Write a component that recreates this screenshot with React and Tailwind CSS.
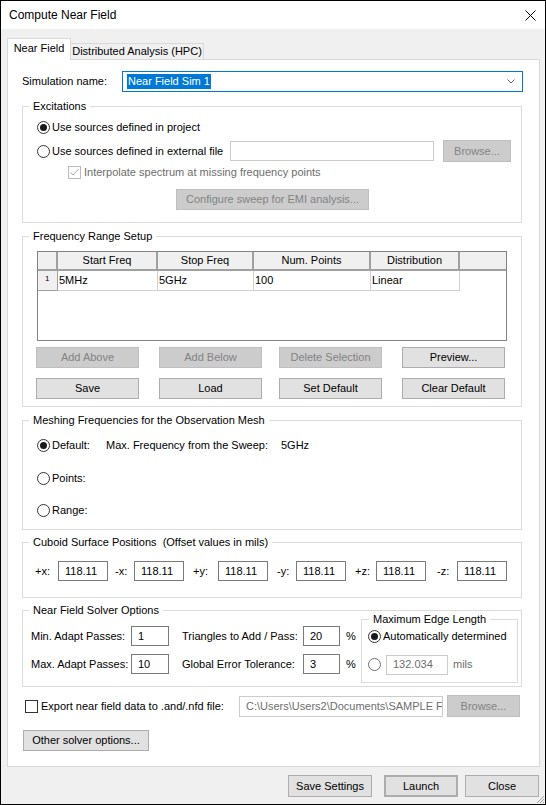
import React from 'react'

function Radio({ checked, disabled }) {
  return (
    <span className={`w-[13px] h-[13px] rounded-full border bg-white flex items-center justify-center shrink-0 ${disabled ? 'border-[#6d6d6d]' : 'border-[#333333]'}`}>
      {checked && <span className="w-[7px] h-[7px] rounded-full bg-[#1a1a1a]" />}
    </span>
  )
}

function Check({ checked, disabled }) {
  return (
    <span className={`w-[13px] h-[13px] border bg-white flex items-center justify-center shrink-0 ${disabled ? 'border-[#bcbcbc]' : 'border-[#333333]'}`}>
      {checked && (
        <svg width="11" height="11" viewBox="0 0 11 11">
          <path d="M1.5 5.5 L4 8 L9.5 2" fill="none" stroke={disabled ? '#a8a8a8' : '#333'} strokeWidth="1" />
        </svg>
      )}
    </span>
  )
}

function Btn({ children, disabled, className = '' }) {
  return (
    <button
      type="button"
      className={`h-[21px] flex items-center justify-center border shrink-0 leading-none ${
        disabled ? 'bg-[#cccccc] border-[#bfbfbf] text-[#838383]' : 'bg-[#e1e1e1] border-[#adadad] text-black'
      } ${className}`}
    >
      {children}
    </button>
  )
}

function Field({ value, className = '', disabled }) {
  return (
    <div
      className={`h-[20px] flex items-center pl-[6px] bg-white border shrink-0 overflow-hidden whitespace-nowrap ${
        disabled ? 'border-[#cccccc] text-[#6d6d6d]' : 'border-[#7a7a7a] text-black'
      } ${className}`}
    >
      {value}
    </div>
  )
}

function Group({ title, className = '', children }) {
  return (
    <fieldset className={`w-[500px] border border-[#dcdcdc] ${className}`}>
      <legend className="ml-[6px] px-[4px] leading-[15px] whitespace-pre">{title}</legend>
      {children}
    </fieldset>
  )
}

const cols = [
  { label: 'Start Freq', w: 'w-[100px]', val: '5MHz' },
  { label: 'Stop Freq', w: 'w-[96px]', val: '5GHz' },
  { label: 'Num. Points', w: 'w-[117px]', val: '100' },
  { label: 'Distribution', w: 'w-[89px]', val: 'Linear' },
]

const offsets = [
  { label: '+x:', lw: 'w-[23px]', gap: 'ml-0' },
  { label: '-x:', lw: 'w-[19px]', gap: 'ml-[7px]' },
  { label: '+y:', lw: 'w-[25px]', gap: 'ml-[9px]' },
  { label: '-y:', lw: 'w-[19px]', gap: 'ml-[9px]' },
  { label: '+z:', lw: 'w-[21px]', gap: 'ml-[9px]' },
  { label: '-z:', lw: 'w-[20px]', gap: 'ml-[11px]' },
]

export default function App() {
  return (
    <div className="relative w-[546px] h-[805px] border border-black bg-[#f0f0f0] text-[11px] leading-[15px] text-black whitespace-nowrap [font-family:'Liberation_Sans',Arial,sans-serif] overflow-hidden">
      {/* Title bar */}
      <div className="h-[28px] bg-white flex items-center justify-between pl-[8px] pr-[9px]">
        <span className="text-[12px]">Compute Near Field</span>
        <svg width="11" height="11" viewBox="0 0 11 11">
          <path d="M0.5 0.5 L10.5 10.5 M10.5 0.5 L0.5 10.5" stroke="#000" strokeWidth="1" />
        </svg>
      </div>

      <div className="pt-[9px] pl-[6px]">
        {/* Tabs */}
        <div className="relative z-10 -mb-px flex items-start h-[22px]">
          <div className="w-[64px] h-[22px] bg-white border border-b-0 border-[#d9d9d9] flex items-center justify-center pb-[2px]">
            Near Field
          </div>
          <div className="mt-[5px] w-[133px] h-[16px] bg-[#f0f0f0] border border-b-0 border-l-0 border-[#d9d9d9] flex items-center justify-center">
            Distributed Analysis (HPC)
          </div>
        </div>

        {/* Tab page */}
        <div className="w-[533px] h-[708px] bg-white border border-[#d9d9d9] pl-[14px] pt-[11px] flex flex-col items-start">
          {/* Simulation name */}
          <div className="flex items-center h-[21px]">
            <span className="w-[100px]">Simulation name:</span>
            <div className="w-[401px] h-[21px] border border-[#0078d7] flex items-center justify-between pl-[4px] pr-[7px]">
              <span className="bg-[#0078d7] text-white px-px">Near Field Sim 1</span>
              <svg width="8" height="5" viewBox="0 0 8 5">
                <path d="M0.5 0.5 L4 4 L7.5 0.5" fill="none" stroke="#606060" strokeWidth="1" />
              </svg>
            </div>
          </div>

          {/* Excitations */}
          <Group title="Excitations" className="mt-[7px] pb-[12px]">
            <div className="mt-[6px] pl-[14px] h-[15px] flex items-center gap-[2px]">
              <Radio checked />
              <span>Use sources defined in project</span>
            </div>
            <div className="mt-[5px] pl-[14px] h-[22px] flex items-center">
              <Radio />
              <span className="ml-[2px] w-[178px]">Use sources defined in external file</span>
              <Field value="" disabled className="w-[204px]" />
              <Btn disabled className="ml-[9px] w-[68px] h-[22px]">Browse...</Btn>
            </div>
            <div className="mt-[3px] pl-[45px] h-[15px] flex items-center gap-[3px] text-[#6d6d6d]">
              <Check checked disabled />
              <span>Interpolate spectrum at missing frequency points</span>
            </div>
            <div className="mt-[9px] pl-[153px] flex">
              <Btn disabled className="w-[193px]">Configure sweep for EMI analysis...</Btn>
            </div>
          </Group>

          {/* Frequency Range Setup */}
          <Group title="Frequency Range Setup" className="mt-[6px] pb-[7px]">
            <div className="mt-[7px] ml-[14px] w-[470px] h-[90px] border border-[#828282] bg-white">
              <div className="flex h-[19px]">
                <div className="w-[20px] bg-[#f0f0f0] border-r-2 border-b-2 border-[#a0a0a0]" />
                {cols.map(c => (
                  <div key={c.label} className={`${c.w} bg-[#f0f0f0] border-r-2 border-b-2 border-[#a0a0a0] flex items-center justify-center`}>
                    {c.label}
                  </div>
                ))}
                <div className="flex-1 bg-[#f0f0f0] border-b-2 border-[#a0a0a0]" />
              </div>
              <div className="flex h-[20px]">
                <div className="w-[20px] bg-[#f0f0f0] border-r border-b border-[#a0a0a0] text-[8px] leading-[10px] pl-[7px] pt-[3px]">1</div>
                {cols.map(c => (
                  <div key={c.label} className={`${c.w} border-r border-b border-[#d0d0d0] flex items-center pl-[1px]`}>
                    {c.val}
                  </div>
                ))}
              </div>
            </div>
            <div className="mt-[6px] ml-[13px] flex">
              <Btn disabled className="w-[103px]">Add Above</Btn>
              <Btn disabled className="ml-[20px] w-[103px]">Add Below</Btn>
              <Btn disabled className="ml-[17px] w-[103px]">Delete Selection</Btn>
              <Btn className="ml-[20px] w-[103px]">Preview...</Btn>
            </div>
            <div className="mt-[10px] ml-[13px] flex">
              <Btn className="w-[103px]">Save</Btn>
              <Btn className="ml-[20px] w-[103px]">Load</Btn>
              <Btn className="ml-[17px] w-[103px]">Set Default</Btn>
              <Btn className="ml-[20px] w-[103px]">Clear Default</Btn>
            </div>
          </Group>

          {/* Meshing */}
          <Group title="Meshing Frequencies for the Observation Mesh" className="mt-[6px] pb-[11px]">
            <div className="mt-[10px] pl-[14px] h-[15px] flex items-center">
              <span className="w-[69px] flex items-center gap-[2px]">
                <Radio checked />
                <span>Default:</span>
              </span>
              <span className="w-[175px]">Max. Frequency from the Sweep:</span>
              <span>5GHz</span>
            </div>
            <div className="mt-[18px] pl-[14px] h-[15px] flex items-center gap-[2px]">
              <Radio />
              <span>Points:</span>
            </div>
            <div className="mt-[17px] pl-[14px] h-[15px] flex items-center gap-[2px]">
              <Radio />
              <span>Range:</span>
            </div>
          </Group>

          {/* Cuboid */}
          <Group title="Cuboid Surface Positions  (Offset values in mils)" className="mt-[5px] pb-[16px]">
            <div className="mt-[11px] pl-[12px] h-[20px] flex items-center">
              {offsets.map(o => (
                <React.Fragment key={o.label}>
                  <span className={`${o.gap} ${o.lw}`}>{o.label}</span>
                  <Field value="118.11" className="w-[50px]" />
                </React.Fragment>
              ))}
            </div>
          </Group>

          {/* Near Field Solver Options */}
          <Group title="Near Field Solver Options" className="mt-[5px]">
            <div className="h-[68px] flex items-start">
              <div className="w-[338px] pl-[8px] pt-[8px] flex flex-col gap-[8px]">
                <div className="flex items-center h-[20px]">
                  <span className="w-[100px]">Min. Adapt Passes:</span>
                  <Field value="1" className="w-[38px]" />
                  <span className="ml-[13px] w-[121px]">Triangles to Add / Pass:</span>
                  <Field value="20" className="w-[37px]" />
                  <span className="ml-[6px]">%</span>
                </div>
                <div className="flex items-center h-[20px]">
                  <span className="w-[100px]">Max. Adapt Passes:</span>
                  <Field value="10" className="w-[38px]" />
                  <span className="ml-[13px] w-[121px]">Global Error Tolerance:</span>
                  <Field value="3" className="w-[37px]" />
                  <span className="ml-[6px]">%</span>
                </div>
              </div>
              <fieldset className="-mt-[6px] w-[157px] border border-[#dcdcdc] pb-[8px]">
                <legend className="ml-[7px] px-[4px] leading-[15px]">Maximum Edge Length</legend>
                <div className="mt-[2px] pl-[6px] h-[15px] flex items-center gap-[2px]">
                  <Radio checked />
                  <span>Automatically determined</span>
                </div>
                <div className="mt-[11px] pl-[6px] h-[19px] flex items-center">
                  <Radio disabled />
                  <Field value="132.034" disabled className="ml-[5px] w-[62px] h-[19px]" />
                  <span className="ml-[5px] text-[#6d6d6d]">mils</span>
                </div>
              </fieldset>
            </div>
          </Group>

          {/* Export */}
          <div className="mt-[8px] ml-[3px] h-[22px] flex items-center">
            <Check />
            <span className="ml-[3px] w-[198px]">Export near field data to .and/.nfd file:</span>
            <Field value="C:\Users\Users2\Documents\SAMPLE F" disabled className="w-[204px] h-[21px]" />
            <Btn disabled className="ml-[4px] w-[73px] h-[22px]">Browse...</Btn>
          </div>

          <Btn className="mt-[13px] ml-px w-[126px]">Other solver options...</Btn>
        </div>
      </div>

      {/* Dialog buttons */}
      <div className="mt-[8px] pr-[6px] flex justify-end">
        <Btn className="w-[84px] h-[22px]">Save Settings</Btn>
        <Btn className="ml-[12px] w-[74px] h-[22px] border-2 border-[#0078d7]">Launch</Btn>
        <Btn className="ml-[7px] w-[74px] h-[22px]">Close</Btn>
      </div>

      {/* Size grip */}
      <svg className="absolute right-0 bottom-0" width="11" height="11" viewBox="0 0 11 11">
        <path d="M10 3 L3 10 M10 6 L6 10 M10 9 L9 10" stroke="#a0a0a0" strokeWidth="1" />
      </svg>
    </div>
  )
}
